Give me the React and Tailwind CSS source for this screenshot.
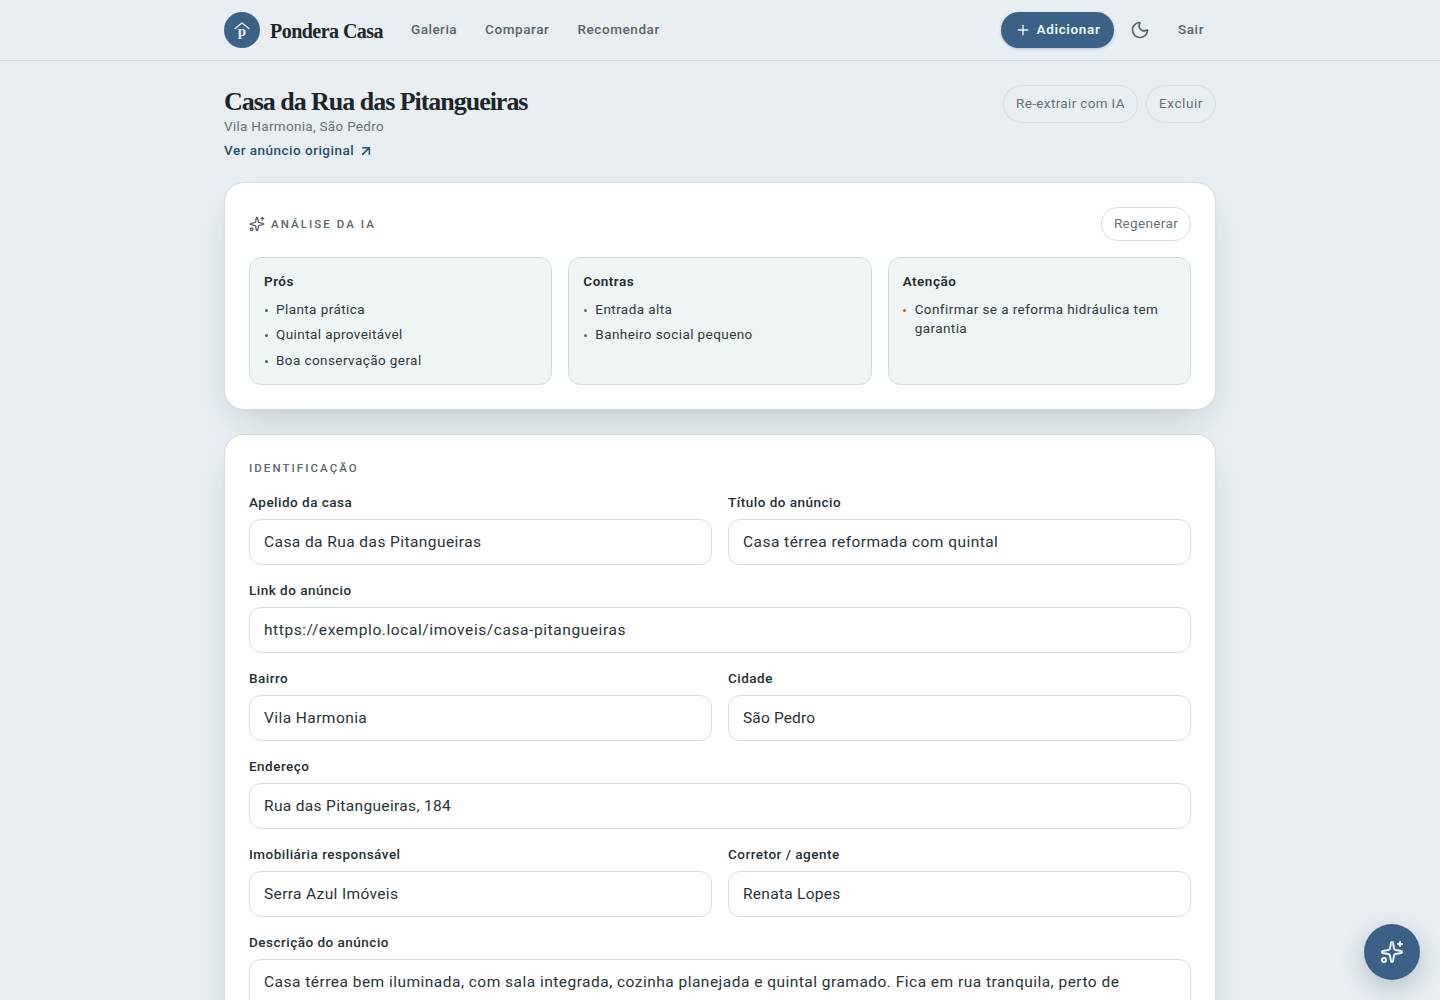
import React from 'react';
import { ArrowUpRight, Moon, Plus } from 'lucide-react';

const card =
  'rounded-[20px] border border-[#d5dcdf] bg-white p-6 shadow-[0_1px_2px_rgba(35,65,70,0.03),0_18px_40px_-16px_rgba(35,65,60,0.25)]';

const Sparkles = ({ className, strokeWidth = 2 }) => (
  <svg
    viewBox="0 0 24 24"
    fill="none"
    stroke="currentColor"
    strokeWidth={strokeWidth}
    strokeLinecap="round"
    strokeLinejoin="round"
    className={className}
  >
    <path d="M11.017 2.814a1 1 0 0 1 1.966 0l1.051 5.558a2 2 0 0 0 1.594 1.594l5.558 1.051a1 1 0 0 1 0 1.966l-5.558 1.051a2 2 0 0 0-1.594 1.594l-1.051 5.558a1 1 0 0 1-1.966 0l-1.051-5.558a2 2 0 0 0-1.594-1.594l-5.558-1.051a1 1 0 0 1 0-1.966l5.558-1.051a2 2 0 0 0 1.594-1.594z" />
    <path d="M20 2v4" />
    <path d="M22 4h-4" />
    <circle cx="4" cy="20" r="2" />
  </svg>
);

const Logo = () => (
  <span className="relative flex size-9 items-center justify-center rounded-full bg-[#3b6286] text-[#e9eff4]">
    <svg viewBox="0 0 36 36" fill="none" stroke="currentColor" strokeWidth="1.3" className="size-9">
      <path d="M11 16.5 18 11l7 5.5" strokeLinecap="round" strokeLinejoin="round" />
    </svg>
    <span className="absolute inset-x-0 top-[10px] text-center font-['Liberation_Serif',serif] text-[15px] leading-[18px] font-bold">
      p
    </span>
  </span>
);

const Header = () => (
  <header className="border-b border-[#d0d9dc]">
    <div className="mx-auto flex h-[60px] w-[992px] items-center">
      <Logo />
      <span className="ml-[10px] pt-0.5 font-['Liberation_Serif',serif] text-[20px] font-bold tracking-[-0.54px] text-[#1c2529]">
        Pondera Casa
      </span>
      <nav className="ml-[28px] flex gap-7 pb-0.5 text-[13.5px] font-medium tracking-[0.58px] text-[#586469]">
        <a className="tracking-[0.5px]">Galeria</a>
        <a>Comparar</a>
        <a>Recomendar</a>
      </nav>
      <div className="ml-auto flex items-center">
        <button className="flex h-9 w-[113px] items-center justify-center gap-[6px] rounded-full bg-[#3b6286] text-[13.5px] font-semibold tracking-[0.65px] text-[#f0f6fa] shadow-[0_1px_3px_rgba(40,90,140,0.3)]">
          <Plus className="size-4" strokeWidth={2} />
          <span className="pb-0.5">Adicionar</span>
        </button>
        <button className="ml-2 flex size-9 items-center justify-center text-[#586469]">
          <Moon className="size-5" strokeWidth={2} />
        </button>
        <button className="ml-2 w-[50px] pb-0.5 text-[13.5px] font-medium tracking-[0.6px] text-[#586469]">
          Sair
        </button>
      </div>
    </div>
  </header>
);

const insights = [
  { title: 'Prós', dot: 'bg-[#34647f]', items: ['Planta prática', 'Quintal aproveitável', 'Boa conservação geral'] },
  { title: 'Contras', dot: 'bg-[#626d72]', items: ['Entrada alta', 'Banheiro social pequeno'] },
  { title: 'Atenção', dot: 'bg-[#b4622d]', items: ['Confirmar se a reforma hidráulica tem garantia'] },
];

const Insight = ({ title, dot, items }) => (
  <div className="rounded-xl border border-[#d5dcdf] bg-[#eff4f5] p-[14px]">
    <h3 className="text-[13.5px] leading-[18px] font-semibold tracking-[0.5px] text-[#232d31]">{title}</h3>
    <ul className="mt-2.5 space-y-1.5">
      {items.map((item) => (
        <li key={item} className="flex gap-2 text-[13.5px] leading-[19.25px] tracking-[0.42px] text-[#30393d]">
          <span className="w-1 shrink-0 pt-[9px] pl-[0.5px]">
            <span className={`block size-[3px] rounded-full ${dot}`} />
          </span>
          <span>{item}</span>
        </li>
      ))}
    </ul>
  </div>
);

const Label = ({ children }) => (
  <span className="mb-2 block text-[13.5px] leading-[18px] font-medium tracking-[0.49px] text-[#262f33]">
    {children}
  </span>
);

const Field = ({ label, value, wide, tracking = 'tracking-[0.43px]' }) => (
  <label className={wide ? 'col-span-2' : ''}>
    <Label>{label}</Label>
    <input
      defaultValue={value}
      className={`block h-[46px] w-full rounded-xl border border-[#d5dcdf] bg-white px-[14px] text-[15.5px] text-[#2a3337] ${tracking}`}
    />
  </label>
);

export default function App() {
  return (
    <div className="relative h-[1000px] overflow-hidden bg-[#e8eef2] font-[Roboto,sans-serif]">
      <Header />
      <main className="mx-auto w-[992px] pt-6">
        <div className="flex h-[73px] items-start justify-between">
          <div>
            <h1 className="font-['Liberation_Serif',serif] text-[26px] leading-[34px] font-bold tracking-[-1.03px] text-[#1c2529]">
              Casa da Rua das Pitangueiras
            </h1>
            <p className="text-[13.5px] leading-[14px] tracking-[0.3px] text-[#667277]">Vila Harmonia, São Pedro</p>
            <a className="mt-2 flex items-center gap-1 text-[13.5px] leading-[18px] font-medium tracking-[0.49px] text-[#2b506b]">
              Ver anúncio original
              <ArrowUpRight className="size-4 translate-y-px" strokeWidth={2.3} />
            </a>
          </div>
          <div className="flex gap-2 text-[13.5px] tracking-[0.35px] text-[#667277]">
            <button className="h-[38px] w-[135px] rounded-full border border-[#d7dee1] pb-0.5">Re-extrair com IA</button>
            <button className="h-[38px] w-[70px] rounded-full border border-[#d7dee1] pb-0.5 tracking-[0.6px]">Excluir</button>
          </div>
        </div>

        <section className={`mt-6 ${card}`}>
          <div className="mb-4 flex items-center justify-between">
            <h2 className="flex items-center gap-1.5 text-[11.5px] font-medium tracking-[2.05px] text-[#5c676c]">
              <Sparkles className="size-4" strokeWidth={2.1} />
              <span className="pt-px">ANÁLISE DA IA</span>
            </h2>
            <button className="h-[34px] w-[90px] rounded-full border border-[#d7dee1] pb-0.5 text-[13.5px] tracking-[0.35px] text-[#667277]">
              Regenerar
            </button>
          </div>
          <div className="grid h-32 grid-cols-3 gap-4">
            {insights.map((insight) => (
              <Insight key={insight.title} {...insight} />
            ))}
          </div>
        </section>

        <section className={`mt-6 ${card}`}>
          <h2 className="mb-4 text-[11.5px] leading-[18px] font-medium tracking-[2.05px] text-[#5c676c]">
            IDENTIFICAÇÃO
          </h2>
          <div className="grid grid-cols-2 gap-4">
            <Field label="Apelido da casa" value="Casa da Rua das Pitangueiras" />
            <Field label="Título do anúncio" value="Casa térrea reformada com quintal" tracking="tracking-[0.46px]" />
            <Field
              label="Link do anúncio"
              value="https://exemplo.local/imoveis/casa-pitangueiras"
              tracking="tracking-[0.58px]"
              wide
            />
            <Field label="Bairro" value="Vila Harmonia" />
            <Field label="Cidade" value="São Pedro" tracking="tracking-[0.15px]" />
            <Field label="Endereço" value="Rua das Pitangueiras, 184" tracking="tracking-[0.34px]" wide />
            <Field label="Imobiliária responsável" value="Serra Azul Imóveis" tracking="tracking-[0.36px]" />
            <Field label="Corretor / agente" value="Renata Lopes" tracking="tracking-[0.28px]" />
            <label className="col-span-2">
              <Label>Descrição do anúncio</Label>
              <textarea
                defaultValue="Casa térrea bem iluminada, com sala integrada, cozinha planejada e quintal gramado. Fica em rua tranquila, perto de"
                className="block h-[118px] w-full resize-none rounded-xl border border-[#d5dcdf] bg-white px-[14px] py-[10px] text-[15.5px] leading-6 tracking-[0.48px] text-[#2a3337]"
              />
            </label>
          </div>
        </section>
      </main>

      <button className="fixed right-5 bottom-5 flex size-14 items-center justify-center rounded-full bg-[#3b6286] text-[#f0f6fa] shadow-[0_8px_24px_rgba(35,60,70,0.25)]">
        <Sparkles className="size-6" />
      </button>
    </div>
  );
}
